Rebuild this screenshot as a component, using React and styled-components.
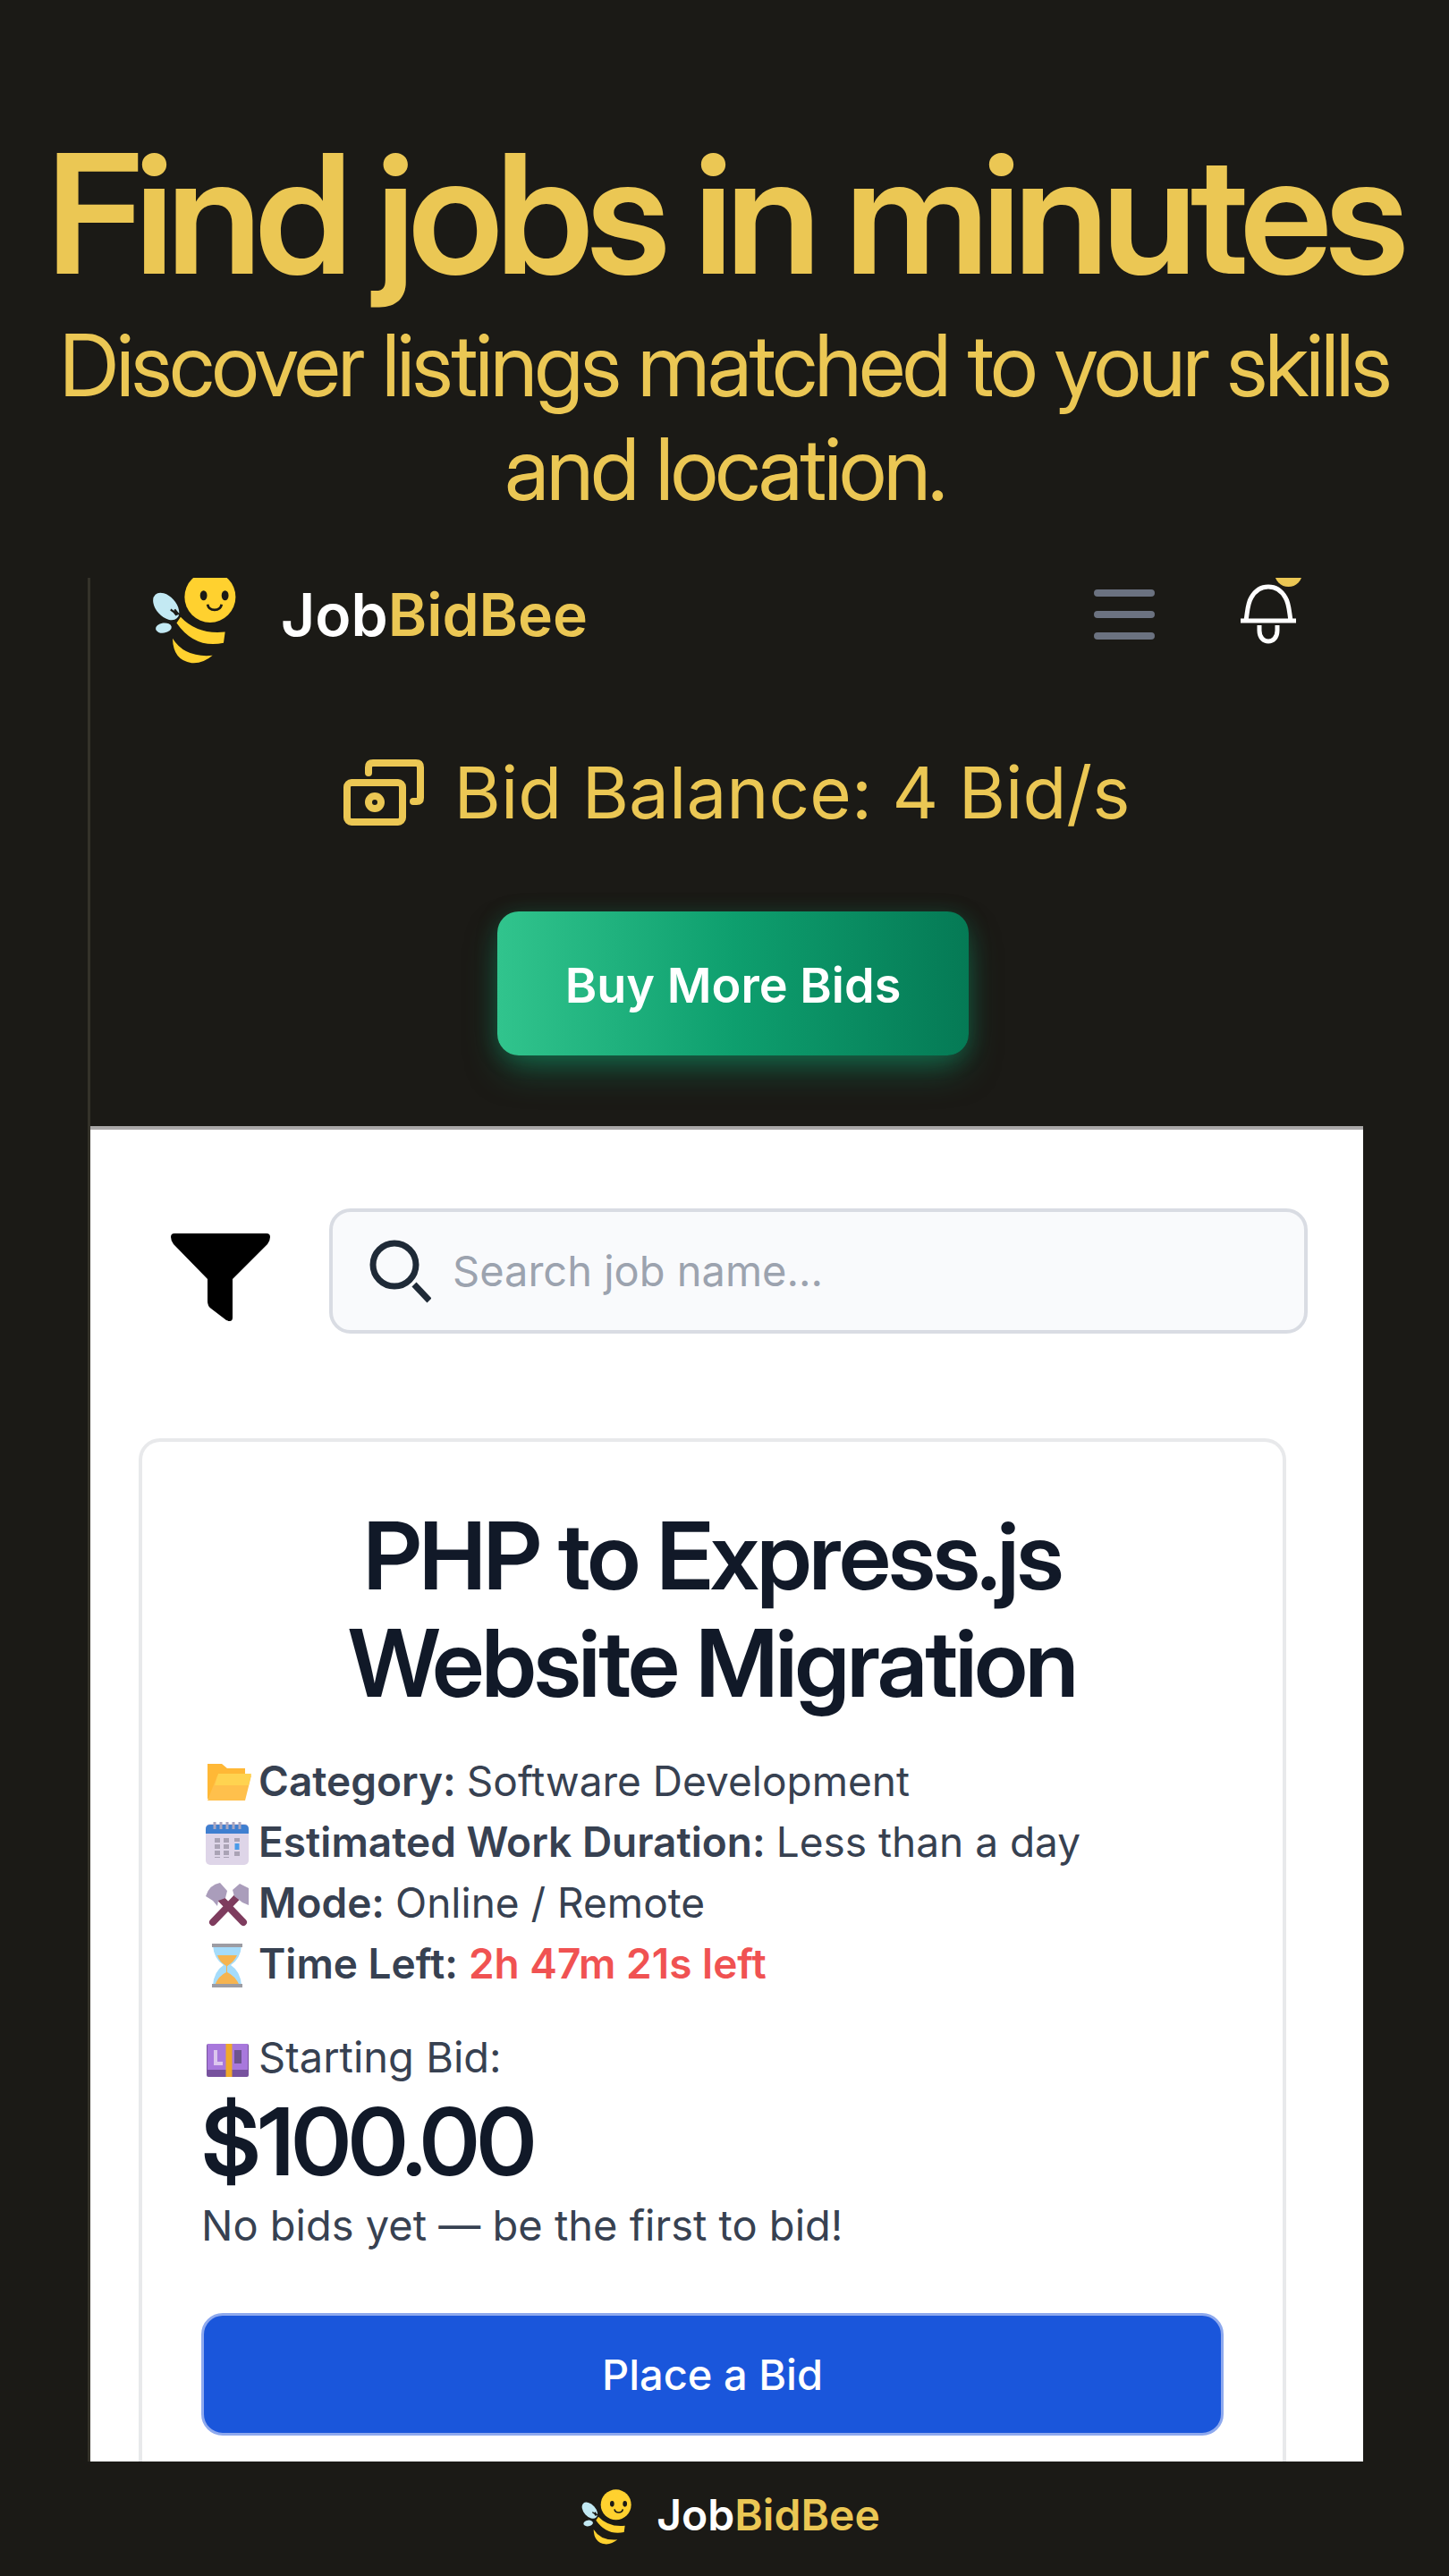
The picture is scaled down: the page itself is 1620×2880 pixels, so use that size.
import React from "react";
import styled, { createGlobalStyle, css } from "styled-components";

const GlobalStyle = createGlobalStyle`
  * { box-sizing: border-box; }
  body { margin: 0; background: #1b1a16; font-family: Inter, "Liberation Sans", sans-serif; }
  h1, h2, p, ul { margin: 0; padding: 0; }
  button { font-family: inherit; border: 0; cursor: pointer; }
`;

const displayFace = css`
  font-family: "Inter Display", Inter, "Liberation Sans", sans-serif;
  font-variation-settings: "opsz" 32;
`;

const Page = styled.main`
  min-height: 100vh;
  display: flex;
  flex-direction: column;
  background: #1b1a16;
`;

const Hero = styled.header`
  padding: 128px 32px 64px;
  text-align: center;
  color: #ebc754;
  ${displayFace}
`;

const Headline = styled.h1`
  font-size: 185px;
  line-height: 222px;
  font-weight: 600;
  letter-spacing: -0.04em;
`;

const Tagline = styled.p`
  font-size: 96px;
  line-height: 116px;
  font-weight: 400;
  letter-spacing: -0.03em;
`;

const Screen = styled.section`
  margin: 0 96px 0 98px;
  border-left: 3px solid #34322a;
  overflow: hidden;
`;

const AccountPanel = styled.div`
  border-bottom: 4px solid #aaa8a8;
`;

const TopBar = styled.nav`
  display: flex;
  align-items: center;
  height: 114px;
  margin-top: -16px;
  padding: 0 75px 0 69px;
`;

const Brand = styled.a`
  display: flex;
  align-items: center;
  gap: ${(p) => (p.$small ? 28 : 50)}px;
  color: #fff;
  font-size: ${(p) => (p.$small ? 48 : 66)}px;
  font-weight: 600;
  line-height: 1;
  text-decoration: none;
  margin-right: ${(p) => (p.$small ? 0 : "auto")};
  svg { width: ${(p) => (p.$small ? 56 : 94)}px; height: ${(p) => (p.$small ? 68 : 114)}px; }
`;

const Accent = styled.span`
  color: #ebc754;
`;

const IconButton = styled.button`
  position: relative;
  display: flex;
  padding: 0;
  background: none;
  margin-left: ${(p) => p.$gap || 0}px;
`;

const Badge = styled.span`
  position: absolute;
  right: -7px;
  top: -28px;
  width: 31px;
  height: 31px;
  border-radius: 50%;
  background: #ebc754;
`;

const Balance = styled.div`
  display: flex;
  flex-direction: column;
  align-items: center;
  gap: 84px;
  padding: 93px 0 79px 14px;
`;

const BalanceLine = styled.p`
  display: flex;
  align-items: center;
  gap: 34px;
  padding-left: 8px;
  font-size: 80px;
  line-height: 98px;
  color: #ebc754;
`;

const BuyButton = styled.button`
  height: 161px;
  padding: 4px 76px 0;
  border-radius: 24px;
  font-size: 54px;
  font-weight: 600;
  color: #fff;
  background: linear-gradient(90deg, #31c48d, #0e9f6e 50%, #057a55);
  box-shadow: 0 20px 40px -8px rgba(14, 159, 110, 0.5), 0 4px 24px rgba(14, 159, 110, 0.25);
`;

const Listings = styled.div`
  background: #fff;
  padding: 88px 0 0;
`;

const SearchRow = styled.form`
  display: flex;
  align-items: center;
  gap: 66px;
  padding: 0 62px 0 90px;
`;

const SearchBox = styled.label`
  flex: 1;
  display: flex;
  align-items: center;
  gap: 24px;
  height: 140px;
  padding: 0 40px;
  border: 4px solid #d9dce3;
  border-radius: 24px;
  background: #f9fafc;
`;

const SearchInput = styled.input`
  flex: 1;
  min-width: 0;
  padding: 0;
  border: 0;
  outline: 0;
  background: none;
  font: 400 47px/60px Inter, "Liberation Sans", sans-serif;
  color: #1f2a37;
  &::placeholder { color: #9ca3af; opacity: 1; }
`;

const JobCard = styled.article`
  margin: 117px 86px 0 54px;
  padding: 67px 66px 29px;
  border: 4px solid #e8e9eb;
  border-bottom: 0;
  border-radius: 24px 24px 0 0;
  color: #374151;
`;

const JobTitle = styled.h2`
  max-width: 1000px;
  margin: 0 auto 38px;
  text-align: center;
  font-size: 104px;
  line-height: 120px;
  font-weight: 600;
  letter-spacing: -0.025em;
  color: #111928;
  ${displayFace}
`;

const Facts = styled.ul`
  list-style: none;
  margin-bottom: 37px;
`;

const Fact = styled.li`
  display: flex;
  align-items: center;
  font-size: 46px;
  line-height: 68px;
  svg { width: 52px; height: 52px; margin: 6px 8px 0 4px; }
`;

const Note = styled(Fact).attrs({ as: "p" })`
  font-size: 47px;
`;

const Label = styled.strong`
  font-weight: 600;
  margin-right: 12px;
`;

const Countdown = styled.strong`
  font-weight: 600;
  color: #f05252;
`;

const Price = styled.p`
  font-size: 104px;
  line-height: 120px;
  font-weight: 600;
  letter-spacing: -0.025em;
  color: #111928;
  ${displayFace}
`;

const BidButton = styled.button`
  width: 100%;
  height: 137px;
  margin-top: 64px;
  border: 3px solid #8ea9ee;
  border-radius: 24px;
  background: #1a56db;
  color: #fff;
  font-size: 47px;
  font-weight: 500;
`;

const Footer = styled.footer`
  flex: 1;
  min-height: 124px;
  padding: 0 0 8px 14px;
  display: flex;
  justify-content: center;
  align-items: center;
`;

const Bee = () => (
  <svg viewBox="155 122 168 204" aria-hidden="true">
    <ellipse cx="183" cy="208" rx="20" ry="32" transform="rotate(-42 183 208)" fill="#c3e9f3" />
    <ellipse cx="178" cy="251" rx="16" ry="10" transform="rotate(-8 178 251)" fill="#c3e9f3" />
    <path d="M192 214q8 4 12 12M200 214l8 10" stroke="#1b1a16" strokeWidth="4" fill="none" />
    <circle cx="271" cy="189" r="51" fill="#ffd12f" />
    <ellipse cx="258" cy="186" rx="7" ry="10" fill="#1b1a16" />
    <ellipse cx="301" cy="186" rx="7" ry="10" fill="#1b1a16" />
    <path d="M266 204q2 11 14 11t14-11" stroke="#1b1a16" strokeWidth="5" fill="none" />
    <path d="M212 229q34 36 89 30l-3 22q-58 12-94-40z" fill="#ffd12f" />
    <path d="M196 272q24 39 80 34-20 17-42 15-37-5-38-49z" fill="#ffd12f" />
  </svg>
);

const MenuIcon = () => (
  <svg width="68" height="58" viewBox="0 0 68 58" stroke="#6b7280" strokeWidth="8" strokeLinecap="round" aria-hidden="true">
    <path d="M4 5h60M4 29h60M4 53h60" />
  </svg>
);

const BellIcon = () => (
  <svg width="62" height="68" viewBox="0 0 62 68" fill="none" stroke="#fff" strokeWidth="5" aria-hidden="true">
    <path d="M0 41h62M6 41C8 28 8 21 12 15 21-1 41-1 50 15c4 6 4 13 6 26M21 46v6c0 16 20 16 20 0v-6" />
  </svg>
);

const CashIcon = () => (
  <svg width="90" height="78" viewBox="0 0 90 78" fill="none" stroke="#ebc754" strokeWidth="8" strokeLinecap="round" strokeLinejoin="round" aria-hidden="true">
    <path d="M28 17V11q0-5 5-5h48q5 0 5 5v34q0 4-4 4h-4" />
    <rect x="4" y="28" width="62" height="44" rx="5" />
    <circle cx="35" cy="50" r="7" />
  </svg>
);

const FilterIcon = () => (
  <svg width="111" height="114" viewBox="0 -15 111 114" aria-hidden="true">
    <path d="M4 0H107Q111 0 111 4 111 8 108 12L69 51V94Q69 100 62 97L45 84Q41 81 41 76V51L3 12Q0 8 0 4 0 0 4 0z" />
  </svg>
);

const SearchIcon = () => (
  <svg width="70" height="72" viewBox="0 0 70 72" fill="none" stroke="#1f2a37" strokeWidth="7" aria-hidden="true">
    <circle cx="29" cy="29" r="24" />
    <path d="M51 51l17 18" />
  </svg>
);

const FolderIcon = () => (
  <svg viewBox="0 0 52 52" aria-hidden="true">
    <path d="M3 4h16l6 5h20v34H3z" fill="#ffb836" />
    <path d="M14 17h38l-7 28H3z" fill="#ffc04c" />
    <path d="M15 15h37l-3 13H11z" fill="#ffd350" />
  </svg>
);

const CalendarIcon = () => (
  <svg viewBox="0 0 52 52" aria-hidden="true">
    <rect x="1" y="3" width="48" height="46" rx="5" fill="#ded5e8" />
    <path d="M1 14V9q0-5 5-5h38q5 0 5 5v5z" fill="#3f7fd0" />
    <path d="M11 1v8M18 1v8M25 1v8M32 1v8M39 1v8" stroke="#a9a6c0" strokeWidth="3" />
    <path d="M14 19v22M24 19v22M36 19v4M36 34v7" stroke="#aaa3b5" strokeWidth="6" strokeDasharray="5 2" />
    <path d="M36 25v7" stroke="#4a9be8" strokeWidth="5" />
  </svg>
);

const ToolsIcon = () => (
  <svg viewBox="0 0 52 52" aria-hidden="true">
    <path d="M9 45L36 17M43 45L18 19" stroke="#7e3c5e" strokeWidth="8" strokeLinecap="round" />
    <path d="M1 16Q5 3 17 1l8 9-2 8-8 3-1 6-5-6z" fill="#aa9dbb" />
    <path d="M31 9l8-7 10 5v19l-7-3-9-7z" fill="#aa9dbb" />
  </svg>
);

const HourglassIcon = () => (
  <svg viewBox="0 0 52 52" aria-hidden="true">
    <path d="M9 3h32q-1 15-12 22 11 7 12 23H9q1-16 12-23Q10 18 9 3z" fill="#a5dcfb" />
    <path d="M14 14h22q-3 7-11 12v7q9 4 14 15H11q4-11 13-15v-7q-8-5-10-12z" fill="#f6b450" />
    <path d="M8 3h34M8 48h34" stroke="#9c9ca3" strokeWidth="4" />
  </svg>
);

const MoneyIcon = () => (
  <svg viewBox="0 0 52 52" aria-hidden="true">
    <rect x="2" y="8" width="47" height="37" rx="2" fill="#77529e" />
    <rect x="3" y="8" width="45" height="29" fill="#a878dc" />
    <path d="M12 15v15h8" stroke="#dcc6ee" strokeWidth="4" fill="none" />
    <path d="M33 15h8v15h-8z" fill="#6d548f" />
    <path d="M27 8v37" stroke="#f0a92a" strokeWidth="7" />
  </svg>
);

const facts = [
  { icon: <FolderIcon />, label: "Category:", value: "Software Development" },
  { icon: <CalendarIcon />, label: "Estimated Work Duration:", value: "Less than a day" },
  { icon: <ToolsIcon />, label: "Mode:", value: "Online / Remote" },
  { icon: <HourglassIcon />, label: "Time Left:", value: <Countdown>2h 47m 21s left</Countdown> },
];

const Logo = ({ small }) => (
  <Brand href="#" $small={small}>
    <Bee />
    <span>Job<Accent>BidBee</Accent></span>
  </Brand>
);

export default function App() {
  return (
    <Page>
      <GlobalStyle />
      <Hero>
        <Headline>Find jobs in minutes</Headline>
        <Tagline>Discover listings matched to your skills and location.</Tagline>
      </Hero>
      <Screen>
        <AccountPanel>
          <TopBar>
            <Logo />
            <IconButton aria-label="Menu"><MenuIcon /></IconButton>
            <IconButton aria-label="Notifications" $gap={96}><BellIcon /><Badge /></IconButton>
          </TopBar>
          <Balance>
            <BalanceLine><CashIcon />Bid Balance: 4 Bid/s</BalanceLine>
            <BuyButton>Buy More Bids</BuyButton>
          </Balance>
        </AccountPanel>
        <Listings>
          <SearchRow>
            <IconButton type="button" aria-label="Filter jobs"><FilterIcon /></IconButton>
            <SearchBox>
              <SearchIcon />
              <SearchInput type="text" aria-label="Search job name" placeholder="Search job name..." />
            </SearchBox>
          </SearchRow>
          <JobCard>
            <JobTitle>PHP to Express.js Website Migration</JobTitle>
            <Facts>
              {facts.map((f) => (
                <Fact key={f.label}>{f.icon}<Label>{f.label}</Label><span>{f.value}</span></Fact>
              ))}
            </Facts>
            <Note><MoneyIcon />Starting Bid:</Note>
            <Price>$100.00</Price>
            <Note>No bids yet — be the first to bid!</Note>
            <BidButton>Place a Bid</BidButton>
          </JobCard>
        </Listings>
      </Screen>
      <Footer><Logo small /></Footer>
    </Page>
  );
}
